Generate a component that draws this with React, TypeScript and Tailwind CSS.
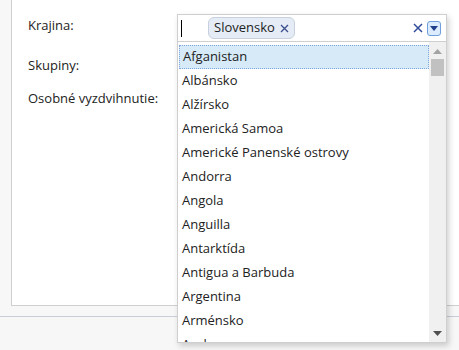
const countries = [
  "Afganistan",
  "Albánsko",
  "Alžírsko",
  "Americká Samoa",
  "Americké Panenské ostrovy",
  "Andorra",
  "Angola",
  "Anguilla",
  "Antarktída",
  "Antigua a Barbuda",
  "Argentina",
  "Arménsko",
  "Aruba",
];

export default function App() {
  return (
    <div
      className="relative h-[350px] w-[459px] overflow-hidden bg-[#f7f7f7] text-[13px] text-[#222]"
      style={{ fontFamily: '"Open Sans", "DejaVu Sans", sans-serif' }}
    >
      {/* form panel */}
      <div className="ml-[11px] h-[306px] border-b border-l border-[#cfcfcf] bg-white">
        <div className="flex flex-col pl-[16px] pt-[16px]">
          <div className="h-[20px]">Krajina:</div>
          <div className="mt-[20px] h-[20px]">Skupiny:</div>
          <div className="mt-[13px] h-[20px]">Osobné vyzdvihnutie:</div>
        </div>
      </div>
      <div className="mt-[10px] h-px bg-[#c9cdd8]" />

      {/* multiselect */}
      <div className="absolute left-[177px] top-[14px] w-[270px] shadow-[2px_3px_6px_rgba(0,0,0,0.18)]">
        <div className="flex h-[28px] items-center border border-[#cfcfcf] bg-white pl-[3px] pr-[5px]">
          <div className="h-[17px] w-px bg-black" />
          <div className="ml-[26px] flex h-[22px] items-center gap-[5px] rounded-[6px] border border-[#c6d0de] bg-[#e5ecf6] px-[5px]">
            <span>Slovensko</span>
            <svg width="9" height="9" viewBox="0 0 9 9">
              <path d="M1 1l7 7M8 1L1 8" stroke="#3b4f8c" strokeWidth="1.3" />
            </svg>
          </div>
          <div className="flex-1" />
          <svg className="mr-[4px]" width="10" height="10" viewBox="0 0 10 10">
            <path d="M1 1l8 8M9 1L1 9" stroke="#2f4d9b" strokeWidth="1.5" />
          </svg>
          <div className="flex h-[15px] w-[14px] items-center justify-center rounded-[3px] border border-[#6f9fdc] bg-[#dcebfd]">
            <svg width="8" height="5" viewBox="0 0 8 5">
              <path d="M0 0h8L4 5z" fill="#1f3f8a" />
            </svg>
          </div>
        </div>
        <div className="flex h-[301px] border border-t-0 border-[#cfcfcf] bg-white">
          <div className="flex-1 overflow-hidden pl-px pt-[3px]">
            {countries.map((c, i) => (
              <div
                key={c}
                className={
                  "flex h-[24px] items-center pl-[3px] " +
                  (i === 0 ? "border border-dotted border-[#7fa6dc] bg-[#d6eaf8] pl-[2px]" : "")
                }
              >
                {c}
              </div>
            ))}
          </div>
          <div className="flex w-[17px] flex-col items-center bg-[#f0f0f0]">
            <svg className="mt-[7px]" width="9" height="5" viewBox="0 0 9 5">
              <path d="M0 5h9L4.5 0z" fill="#a3a3a3" />
            </svg>
            <div className="mt-[5px] h-[17px] w-[13px] bg-[#c1c1c1]" />
            <div className="flex-1" />
            <svg className="mb-[6px]" width="9" height="5" viewBox="0 0 9 5">
              <path d="M0 0h9L4.5 5z" fill="#505050" />
            </svg>
          </div>
        </div>
      </div>
    </div>
  );
}
